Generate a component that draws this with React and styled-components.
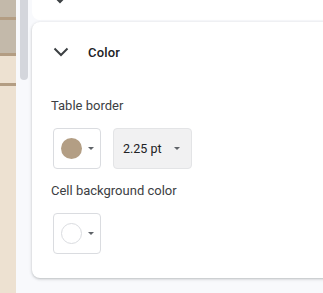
import React from "react";
import styled, { createGlobalStyle } from "styled-components";

const Global = createGlobalStyle`
  html, body { margin: 0; padding: 0; }
  body { background: #f8f9fc; font-family: Roboto, "Noto Sans", Arial, sans-serif; overflow: hidden; }
  #root { width: 323px; height: 293px; }
`;

const Screen = styled.div`
  display: flex;
  width: 323px;
  height: 293px;
  overflow: hidden;
`;

const TableStrip = styled.div`
  width: 16px;
  flex: none;
  display: flex;
  flex-direction: column;
`;

const Cell = styled.div`
  height: ${(p) => (p.$grow ? "auto" : `${p.$h}px`)};
  flex: ${(p) => (p.$grow ? 1 : "none")};
  background: ${(p) => (p.$dark ? "#c3b9aa" : "#ede1d1")};
  border-bottom: ${(p) => (p.$grow ? "none" : "3px solid #b39d83")};
`;

const Panel = styled.div`
  position: relative;
  flex: 1;
  background: #f8f9fc;
  padding-left: 16px;
  display: flex;
  flex-direction: column;
`;

const ScrollThumb = styled.div`
  position: absolute;
  left: 4px;
  top: 0;
  width: 8px;
  height: 80px;
  background: #d4d6dc;
  border-radius: 0 0 4px 4px;
`;

const PrevCard = styled.div`
  height: 20px;
  margin-right: -20px;
  background: #ffffff;
  border-radius: 0 0 8px 8px;
  overflow: hidden;
  padding-left: 20px;
`;

const PrevTip = styled.svg`
  display: block;
  margin-top: -6px;
`;

const Card = styled.div`
  margin-top: 2px;
  margin-right: -20px;
  height: 256px;
  background: #ffffff;
  border-radius: 8px 0 0 8px;
  box-shadow: 0 1px 2px rgba(60, 64, 67, 0.2), 0 1px 3px 1px rgba(60, 64, 67, 0.1);
  padding: 16px 20px 0 19px;
  box-sizing: border-box;
`;

const Header = styled.div`
  display: flex;
  align-items: center;
  height: 28px;
  gap: 19px;
  padding-left: 2px;
`;

const Title = styled.div`
  font-size: 13px;
  font-weight: 500;
  color: #202124;
  letter-spacing: 0.15px;
`;

const Label = styled.div`
  font-size: 13px;
  line-height: 16px;
  color: #3c4043;
  margin-top: ${(p) => p.$mt}px;
`;

const Row = styled.div`
  display: flex;
  gap: 12px;
  margin-top: 14px;
  padding-left: 2px;
`;

const SwatchButton = styled.div`
  width: 48px;
  height: 41px;
  box-sizing: border-box;
  border: 1px solid #dadce0;
  border-radius: 4px;
  background: #ffffff;
  display: flex;
  align-items: center;
  padding-left: 7px;
  gap: 6px;
`;

const Swatch = styled.div`
  width: 21px;
  height: 21px;
  box-sizing: border-box;
  border-radius: 50%;
  background: ${(p) => p.$color};
  border: ${(p) => (p.$outlined ? "1px solid #dadce0" : "none")};
`;

const Caret = styled.div`
  width: 0;
  height: 0;
  border-left: 3.5px solid transparent;
  border-right: 3.5px solid transparent;
  border-top: 3.5px solid #5f6368;
`;

const SizeButton = styled.div`
  width: 79px;
  height: 41px;
  box-sizing: border-box;
  border: 1px solid #e3e4e6;
  border-radius: 4px;
  background: #f1f1f2;
  display: flex;
  align-items: center;
  padding-left: 9px;
  gap: 12px;
  font-size: 12.5px;
  color: #202124;
`;

const Chevron = () => (
  <svg width="16" height="10" viewBox="0 0 16 10">
    <path d="M1.5 1.5 L8 8 L14.5 1.5" fill="none" stroke="#3c4043" strokeWidth="2" />
  </svg>
);

export default function App() {
  return (
    <>
      <Global />
      <Screen>
        <TableStrip>
          <Cell $dark $h={17} />
          <Cell $dark $h={33} />
          <Cell $h={27} />
          <Cell $grow />
        </TableStrip>
        <Panel>
          <ScrollThumb />
          <PrevCard>
            <PrevTip width="16" height="10" viewBox="0 0 16 10">
              <path d="M1.5 1.5 L8 8 L14.5 1.5" fill="none" stroke="#3c4043" strokeWidth="2" />
            </PrevTip>
          </PrevCard>
          <Card>
            <Header>
              <Chevron />
              <Title>Color</Title>
            </Header>
            <Label $mt={32}>Table border</Label>
            <Row>
              <SwatchButton>
                <Swatch $color="#b39e84" />
                <Caret />
              </SwatchButton>
              <SizeButton>
                <span>2.25 pt</span>
                <Caret />
              </SizeButton>
            </Row>
            <Label $mt={14}>Cell background color</Label>
            <Row>
              <SwatchButton>
                <Swatch $color="#ffffff" $outlined />
                <Caret />
              </SwatchButton>
            </Row>
          </Card>
        </Panel>
      </Screen>
    </>
  );
}
